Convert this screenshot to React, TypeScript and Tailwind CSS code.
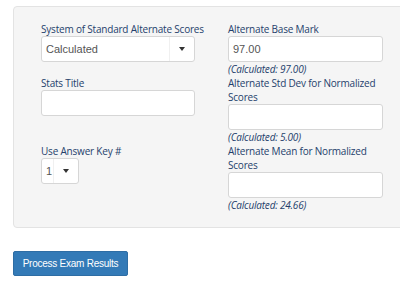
import React from "react";

const label = "block text-[10px] leading-[14px] tracking-[-0.2px] text-[#253f6c] [font-family:'Open_Sans',sans-serif] whitespace-nowrap";
const labelWrap = "block text-[10px] leading-[14px] tracking-[-0.2px] text-[#253f6c] [font-family:'Open_Sans',sans-serif]";
const calc = "block text-[10px] leading-[14px] tracking-[-0.2px] italic text-[#253f6c] [font-family:'Open_Sans',sans-serif]";
const box = "h-[26px] bg-white border border-[#d6d6d6] rounded-[3px] text-[11px] text-[#555] [font-family:'Liberation_Sans',Arial,sans-serif]";

function Select({ value, width }: { value: string; width: string }) {
  return (
    <div className={`${box} ${width} flex items-stretch`}>
      <div className="flex-1 flex items-center pl-[4px]">{value}</div>
      <div className="w-[25px] border-l border-[#f0f0f0] flex items-center justify-center">
        <svg width="6" height="4" viewBox="0 0 6 4"><path d="M0 0h6L3 4z" fill="#333" /></svg>
      </div>
    </div>
  );
}

function Input({ value }: { value?: string }) {
  return <div className={`${box} w-full flex items-center pl-[4px]`}>{value}</div>;
}

export default function App() {
  return (
    <div className="w-[400px] h-[282px] overflow-hidden bg-white relative">
      <div className="ml-[13px] mt-[6px] w-[420px] border border-[#e3e3e3] rounded-[4px] bg-[#f5f5f5] pt-[15px] pb-[15px] pl-[27px]">
        <div className="grid grid-cols-[154px_155px] gap-x-[33px]">
          <div className="h-[54px]">
            <span className={label}>System of Standard Alternate Scores</span>
            <Select value="Calculated" width="w-[154px]" />
          </div>
          <div className="h-[54px]">
            <span className={label}>Alternate Base Mark</span>
            <Input value="97.00" />
            <span className={calc}>(Calculated: 97.00)</span>
          </div>
          <div className="h-[68px]">
            <span className={label}>Stats Title</span>
            <Input />
          </div>
          <div className="h-[68px]">
            <span className={labelWrap}>Alternate Std Dev for Normalized Scores</span>
            <Input />
            <span className={calc}>(Calculated: 5.00)</span>
          </div>
          <div>
            <span className={label}>Use Answer Key #</span>
            <Select value="1" width="w-[38px]" />
          </div>
          <div>
            <span className={labelWrap}>Alternate Mean for Normalized Scores</span>
            <Input />
            <span className={calc}>(Calculated: 24.66)</span>
          </div>
        </div>
      </div>
      <div className="ml-[13px] mt-[23px]">
        <button className="w-[115px] h-[25px] bg-[#337ab7] border border-[#2e6da4] rounded-[2px] text-white text-[10px] tracking-[-0.25px] [font-family:'Liberation_Sans',Arial,sans-serif] flex items-center justify-center">
          Process Exam Results
        </button>
      </div>
    </div>
  );
}
